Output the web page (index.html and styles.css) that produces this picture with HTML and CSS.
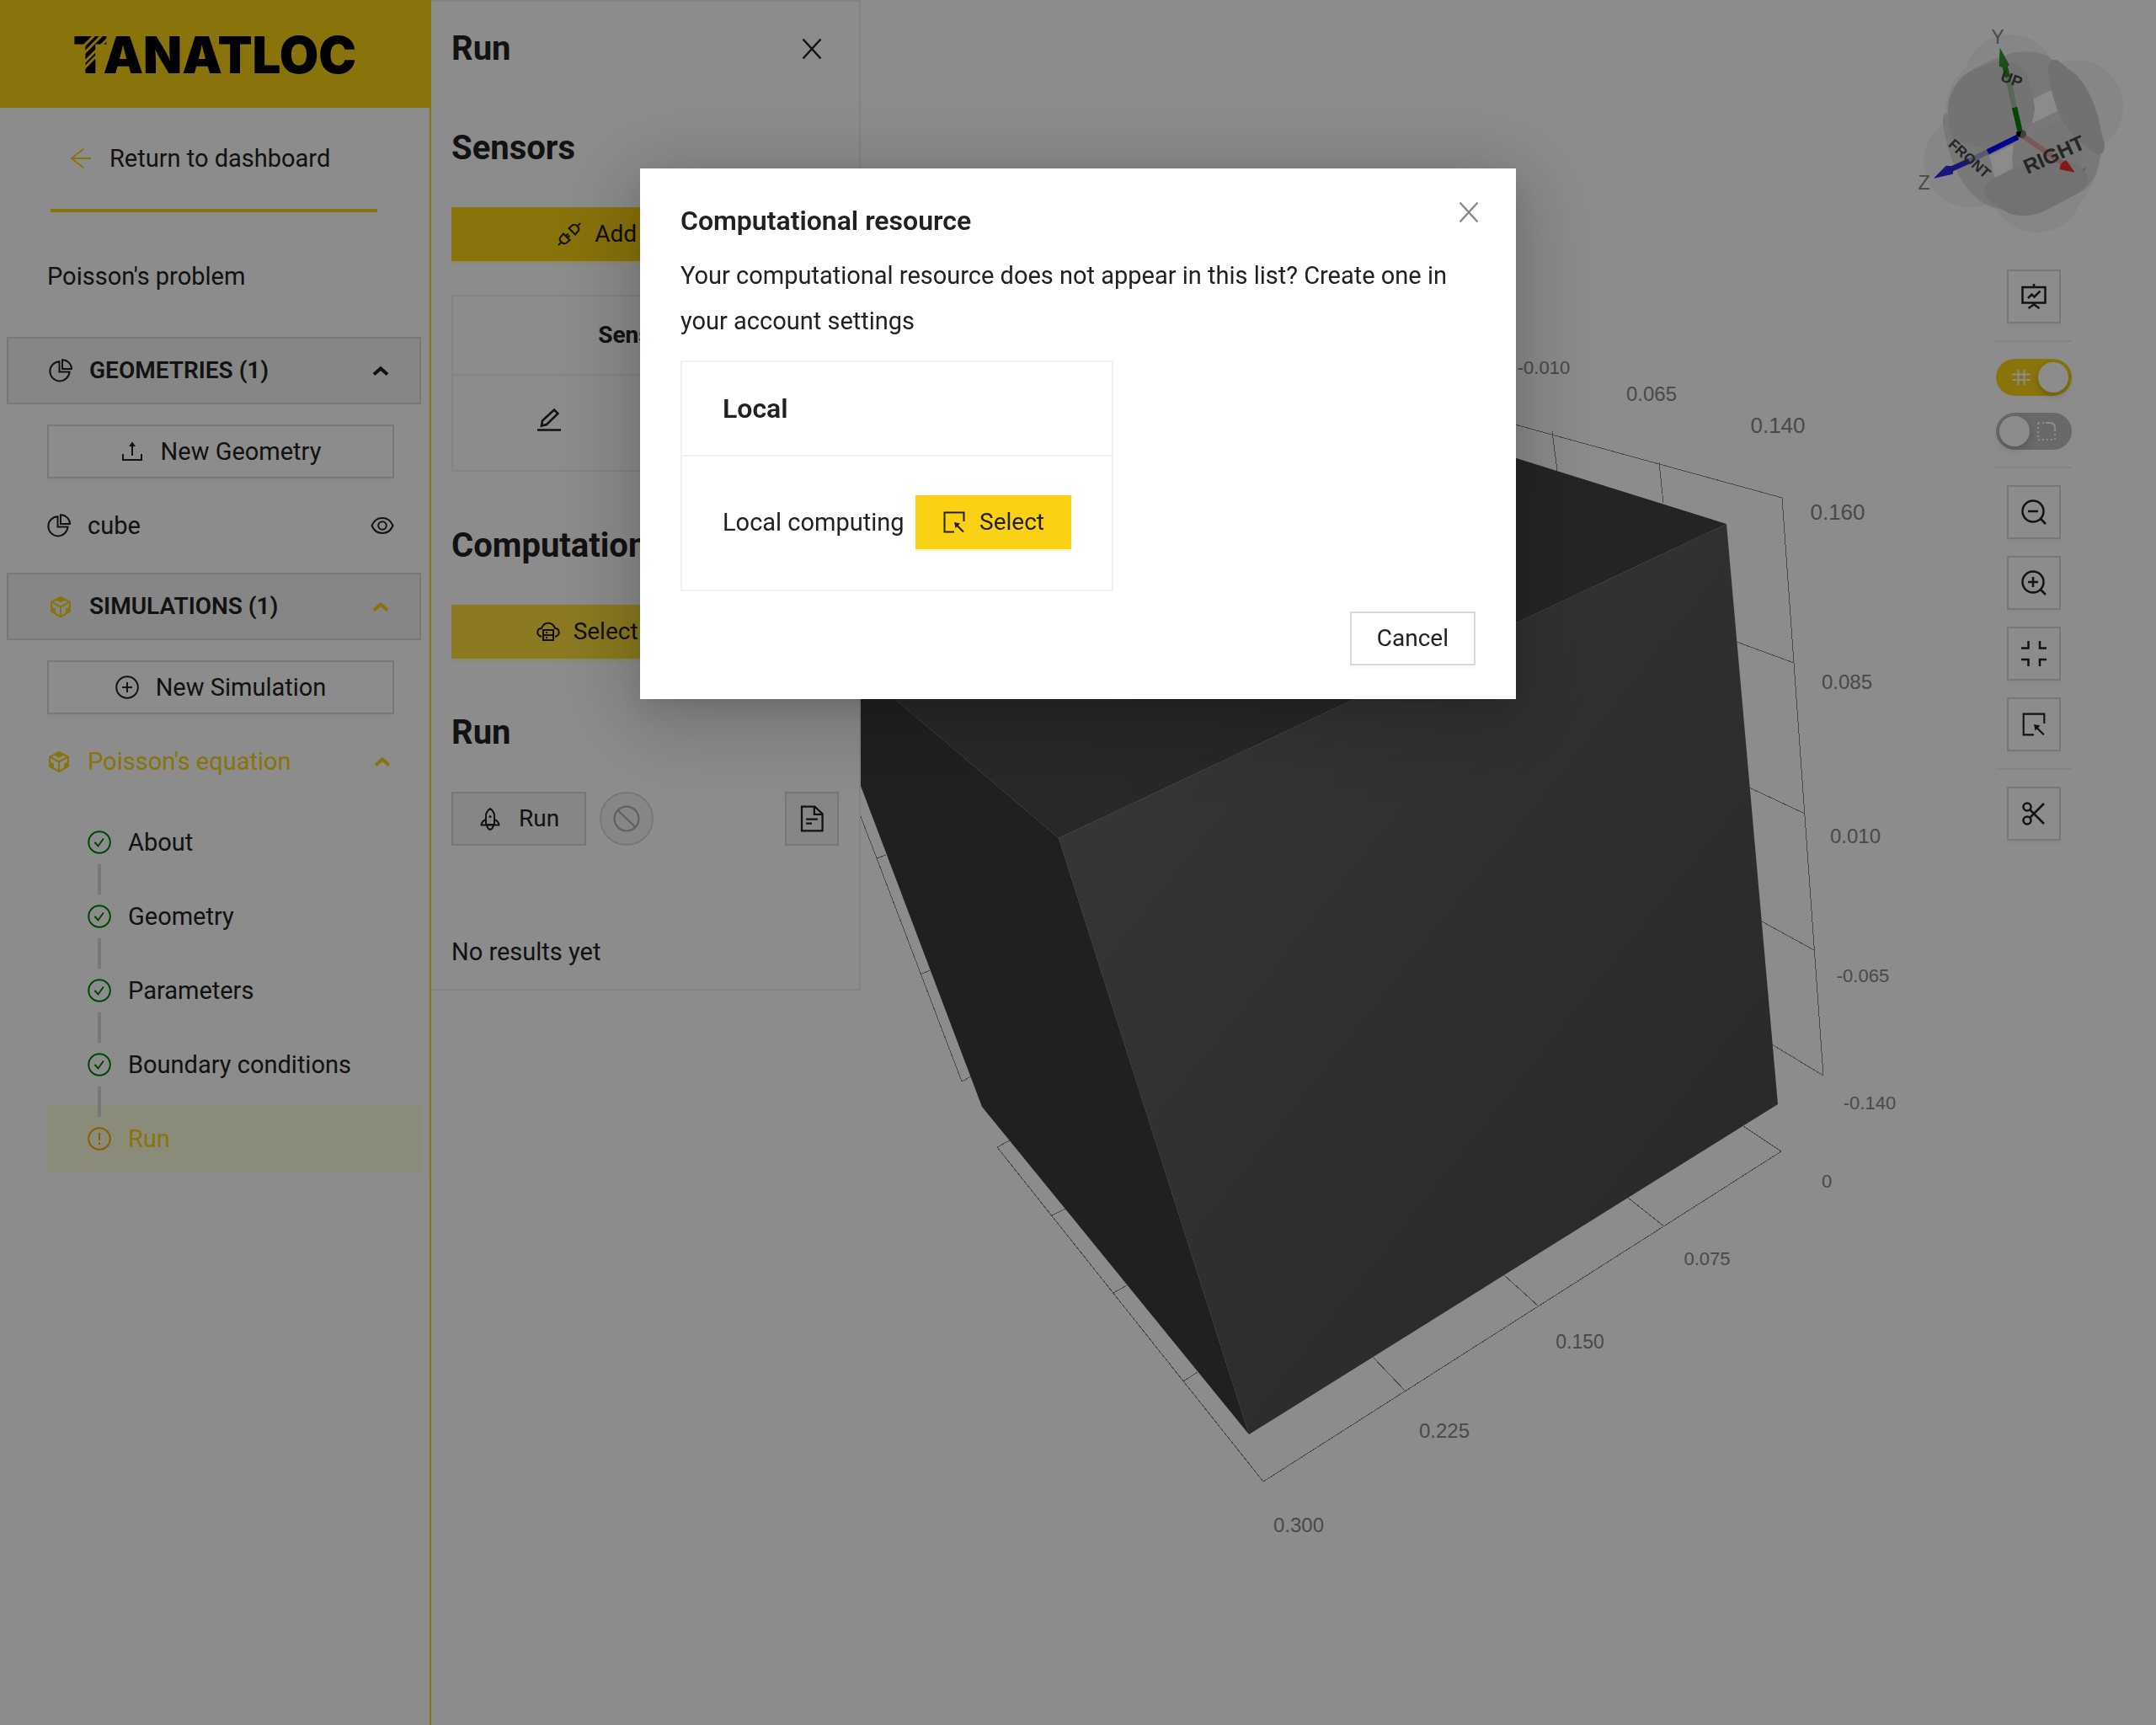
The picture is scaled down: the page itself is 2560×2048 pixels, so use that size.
FILE: index.html
```html
<!DOCTYPE html>
<html lang="en">
<head>
<meta charset="utf-8">
<title>Tanatloc</title>
<link rel="stylesheet" href="styles.css">
</head>
<body>
<svg class="sprite" aria-hidden="true">
  <symbol id="i-pie" viewBox="0 0 28 28"><path d="M12.500 3.200A11.600 11.600 0 1 0 24.500 15.500H12.500Z"/><path d="M16 1.200V12H27A11 11 0 0 0 16 1.200Z"/></symbol>
  <symbol id="i-cube" viewBox="0 0 28 28"><path d="M14 3 25 8.500V20L14 26 3 20V8.500ZM3 8.500 14 14.500 25 8.500M14 14.500V26"/><path class="solid" d="M14 2 21 6 14 9.500 7 6ZM3 14 8 17V22.500L3 20ZM25 14 20 17V22.500L25 20Z"/></symbol>
  <symbol id="i-up" viewBox="0 0 28 28"><path class="thick" d="M6 18.500 14 11.500 22 18.500"/></symbol>
  <symbol id="i-upload" viewBox="0 0 28 28"><path d="M3 17V24H25V17M14 19V6"/><path class="solid" d="M14 2.500 18 8H10Z"/></symbol>
  <symbol id="i-plus" viewBox="0 0 28 28"><circle cx="14" cy="14" r="12.800"/><path d="M14 8V20M8 14H20"/></symbol>
  <symbol id="i-eye" viewBox="0 0 28 28"><path d="M1.500 14C4 8 8.500 5 14 5S24 8 26.500 14C24 20 19.500 23 14 23S4 20 1.500 14Z"/><circle cx="14" cy="14" r="4.800"/></symbol>
  <symbol id="i-check" viewBox="0 0 28 28"><circle cx="14" cy="14" r="12.800"/><path d="M8.500 14 12.500 18.500 19 9.500"/></symbol>
  <symbol id="i-alert" viewBox="0 0 28 28"><circle cx="14" cy="14" r="12.800"/><path d="M14 7V16M14 18.500V21"/></symbol>
  <symbol id="i-back" viewBox="0 0 28 28"><path d="M17 3 3 14 17 25M3 14H26"/></symbol>
  <symbol id="i-close" viewBox="0 0 28 28"><path class="mid" d="M3.500 2.500 24.500 25.500M24.500 2.500 3.500 25.500"/></symbol>
  <symbol id="i-plug" viewBox="0 0 28 28"><path d="M13.500 7 17.500 3.500Q20.500 1.500 23.500 4.500T24.500 10.500L21 14.500ZM14.500 21 10.500 24.500Q7.500 26.500 4.500 23.500T3.500 17.500L7 13.500ZM23.500 4.500 27 1M4.500 23.500 1 27M9.500 16.500 12.500 13.500M11.500 18.500 14.500 15.500"/></symbol>
  <symbol id="i-edit" viewBox="0 0 28 28"><path class="mid" d="M0 26.500H28M5 21.500 6 15.500 20 2.500 24.500 7 11 20Z"/></symbol>
  <symbol id="i-cloud" viewBox="0 0 28 28"><path d="M6 20C-1 18 .5 10 6 10C9 1.500 19 1.500 22 10C27.500 10 29 18 22 20M8 12H20V24H8ZM8 18H20"/><path d="M11 15H13M11 21H13"/></symbol>
  <symbol id="i-rocket" viewBox="0 0 28 28"><path d="M9 21V9Q10.500 4 14 2Q17.500 4 19 9V21ZM9 15Q4 17 3.500 21.500H24.500Q24 17 19 15M10 22Q11 26 14 27Q17 26 18 22"/><circle class="solid" cx="14" cy="11.500" r="1.500"/></symbol>
  <symbol id="i-stop" viewBox="0 0 28 28"><circle cx="14" cy="14" r="12.600"/><path d="M5 5.500 23 22.500"/></symbol>
  <symbol id="i-doc" viewBox="0 0 28 28"><path d="M3.500 1.500H17L25 9V26.500H3.500ZM16.500 2V9.500H25M8 14.500H20M8 19H14"/></symbol>
  <symbol id="i-select" viewBox="0 0 28 28"><path d="M14 25.500H2.500V2.500H25.500V13M25 25.500 17 17.500"/><path class="solid" d="M14 14 21 15.500 15.500 21Z"/></symbol>
  <symbol id="i-board" viewBox="0 0 30 30"><path class="mid" d="M1.500 4H28.500V22.500H1.500ZM15 0V4M8 17 12.500 12.500 15.500 15.500 22.500 8.500M8.500 29 15 24.500 21.500 29M15 22V25"/></symbol>
  <symbol id="i-minus-lens" viewBox="0 0 30 30"><circle class="mid" cx="14" cy="14" r="12.500"/><path class="mid" d="M23 23 29 29M8 14H20"/></symbol>
  <symbol id="i-plus-lens" viewBox="0 0 30 30"><circle class="mid" cx="14" cy="14" r="12.500"/><path class="mid" d="M23 23 29 29M8 14H20M14 8V20"/></symbol>
  <symbol id="i-compress" viewBox="0 0 30 30"><path class="mid" d="M0 8.500H8.500V0M30 8.500H22V0M0 22H8.500V30M30 22H22V30"/></symbol>
  <symbol id="i-cut" viewBox="0 0 30 30"><circle class="mid" cx="7" cy="7" r="4.500"/><circle class="mid" cx="7" cy="23" r="4.500"/><path class="mid" d="M10 10 27 27M10 20 27 3"/></symbol>
  <symbol id="i-grid" viewBox="0 0 22 18"><path d="M0 5.500H22M0 12H22M7.500 0V18M14.500 0V18"/></symbol>
  <symbol id="i-corner" viewBox="0 0 22 22"><path stroke-dasharray="2 3" d="M1 1H11M1 1V21H21V10"/><path d="M10 1H15Q21 1 21 7V11"/></symbol>
</svg>

<div class="app">
  <aside class="sidebar">
    <div class="brand">
      <div class="logo">TANATLOC
        <svg class="logo-stripes" viewBox="0 0 46 44" aria-hidden="true"><path d="M8 16 25 -1M13 20 34 -1M11 33 44 0M12 39 34 17"/></svg>
      </div>
    </div>
    <nav class="menu">
      <a class="return" href="#dashboard"><svg class="icon accent"><use href="#i-back"/></svg>Return to dashboard</a>
      <hr class="accent-rule">
      <div class="project">Poisson's problem</div>

      <button class="group" type="button"><svg class="icon"><use href="#i-pie"/></svg><span>GEOMETRIES (1)</span><svg class="icon"><use href="#i-up"/></svg></button>
      <button class="btn wide" type="button"><svg class="icon"><use href="#i-upload"/></svg>New Geometry</button>
      <a class="item" href="#cube"><svg class="icon"><use href="#i-pie"/></svg><span>cube</span><svg class="icon"><use href="#i-eye"/></svg></a>

      <button class="group on" type="button"><svg class="icon"><use href="#i-cube"/></svg><span>SIMULATIONS (1)</span><svg class="icon"><use href="#i-up"/></svg></button>
      <button class="btn wide" type="button"><svg class="icon"><use href="#i-plus"/></svg>New Simulation</button>
      <a class="item accent" href="#poisson"><svg class="icon"><use href="#i-cube"/></svg><span>Poisson's equation</span><svg class="icon"><use href="#i-up"/></svg></a>

      <ul class="steps">
        <li><a href="#about"><svg class="icon"><use href="#i-check"/></svg>About</a></li>
        <li><a href="#geometry"><svg class="icon"><use href="#i-check"/></svg>Geometry</a></li>
        <li><a href="#parameters"><svg class="icon"><use href="#i-check"/></svg>Parameters</a></li>
        <li><a href="#boundary"><svg class="icon"><use href="#i-check"/></svg>Boundary conditions</a></li>
        <li class="current"><a href="#run"><svg class="icon"><use href="#i-alert"/></svg>Run</a></li>
      </ul>
    </nav>
  </aside>

  <main class="stage">
    <svg class="scene" viewBox="512 0 2048 2048" preserveAspectRatio="xMinYMin meet" role="img" aria-label="Cube geometry">
      <defs>
        <linearGradient id="g-right" gradientUnits="userSpaceOnUse" x1="1257" y1="900" x2="1950" y2="1450"><stop offset="0" stop-color="#636363"/><stop offset="1" stop-color="#4e4e4e"/></linearGradient>
        <linearGradient id="g-top" gradientUnits="userSpaceOnUse" x1="1300" y1="950" x2="1900" y2="600"><stop offset="0" stop-color="#4a4a4a"/><stop offset="1" stop-color="#434343"/></linearGradient>
      </defs>
      <g class="grid">
        <path d="M1500 422 2116 591 2165 1277M1843 512 1849 559M1970 549 1975 597M2062 762 2130 787M2077 935 2143 966M2092 1094 2154 1128M2104 1240 2165 1277"/>
        <path d="M2070 1337 2115 1367 1500 1759 1184 1362 1199 1354M1933 1422 1976 1456M1786 1514 1827 1551M1630 1611 1669 1652M1249 1443 1265 1435M1322 1535 1338 1526M1405 1640 1422 1629"/>
        <path d="M1003 920 1041 1019 1142 1284 1153 1278M1041 1019 1052 1015M1093 1157 1104 1152"/>
      </g>
      <path fill="#3b3b3b" d="M1257 995 1483 1703 1166 1314 1022 933 960 743Z"/>
      <path fill="url(#g-top)" d="M1257 995 2050 622 1400 419 960 743Z"/>
      <path fill="url(#g-right)" d="M1257 995 2050 622 2111 1311 1483 1703Z"/>
      <g class="ticks">
        <text class="s" x="1833" y="444">-0.010</text><text x="1961" y="476">0.065</text><text class="l" x="2111" y="514">0.140</text>
        <text class="l" x="2182" y="617">0.160</text><text x="2193" y="818">0.085</text><text x="2203" y="1001">0.010</text>
        <text class="s" x="2212" y="1166">-0.065</text><text class="s" x="2220" y="1317">-0.140</text>
        <text class="s" x="2169" y="1410">0</text><text class="s" x="2027" y="1502">0.075</text><text class="m" x="1876" y="1601">0.150</text>
        <text x="1715" y="1707">0.225</text><text x="1542" y="1819">0.300</text>
      </g>
    </svg>

    <svg class="gizmo" viewBox="0 0 960 870" role="img" aria-label="Orientation cube">
      <g fill="#f4f4f4"><circle cx="440" cy="285" r="163"/><circle cx="677" cy="380" r="166"/><circle cx="295" cy="575" r="163"/><circle cx="535" cy="660" r="168"/><path d="M208 400Q215 290 290 240L600 250 760 560Q750 660 690 720L560 700 300 660Z"/></g>
      <path fill="#dadada" d="M270 275Q300 245 400 205Q500 165 575 200L720 330 770 520 755 590Q745 640 700 680L480 768 380 738Q300 715 240 590Q200 480 200 420Q205 400 220 405Q215 340 270 275Z"/>
      <path fill="#fdfdfd" d="M520 353 590 319 609 396 520 439ZM366 554 458 512Q438 560 454 598L386 633Z"/>
      <path fill="#d1d1d1" d="M219 390Q220 320 280 265L380 222Q450 205 490 250Q520 300 528 390Q525 440 485 480L380 535 240 500Q222 450 219 390Z"/>
      <path fill="#cecece" d="M576 240Q580 205 610 215L680 270Q730 330 752 410L777 520Q775 560 745 545L680 500Q625 440 605 380Q577 300 576 240Z"/>
      <path fill="#cfcfcf" d="M348 685Q350 655 380 635L560 555Q650 535 690 590Q720 620 718 645Q710 670 680 690L560 753Q500 778 440 762Q350 710 348 685Z"/>
      <path fill="#d7d7d7" d="M454 512 528 470 620 430 700 530 690 590 600 560 450 600Q445 550 454 512Z"/>
      <g fill="none" stroke-width="19"><path stroke="#008000" d="M456 382 476 470"/><path stroke="#a6bba6" d="M432 275 456 382"/><path stroke="#228b22" d="M417 220 432 275"/><path stroke="#0000ff" d="M468 488 360 541"/><path stroke="#a0a0cc" d="M360 541 295 573"/><path stroke="#2828e0" d="M295 573 220 607"/><path stroke="#dda5a5" d="M482 482 625 580"/></g>
      <path fill="#2c932c" d="M404 170 438 232Q420 245 401 236Z"/><path fill="#2828e0" d="M168 635 212 590 240 592 236 620Z"/><path fill="#f22a2a" d="M671 614 617 603Q615 580 640 570Z"/>
      <circle cx="483" cy="478" r="15" fill="#777"/><path fill="#000" d="M462 470 482 466 474 490 464 484Z"/>
      <path stroke="#bbb" stroke-width="7" d="M698 609 709 598"/>
      <g class="axes"><text x="396" y="157">Y</text><text x="134" y="674">Z</text></g>
      <g class="faces"><text font-size="74" transform="translate(607 574) rotate(-24)">RIGHT</text><text font-size="52" transform="translate(284 578) rotate(42)">FRONT</text><text font-size="56" transform="translate(439 300) rotate(20)">UP</text></g>
    </svg>

    <div class="toolbar">
      <button class="tool" type="button" aria-label="Snapshot"><svg><use href="#i-board"/></svg></button>
      <hr>
      <label class="switch"><input type="checkbox" role="switch" checked aria-label="Display grid"><svg class="grid-mark"><use href="#i-grid"/></svg></label>
      <label class="switch"><input type="checkbox" role="switch" aria-label="Transparency"><svg class="corner-mark"><use href="#i-corner"/></svg></label>
      <hr>
      <button class="tool" type="button" aria-label="Zoom out"><svg><use href="#i-minus-lens"/></svg></button>
      <button class="tool" type="button" aria-label="Zoom in"><svg><use href="#i-plus-lens"/></svg></button>
      <button class="tool" type="button" aria-label="Zoom to fit"><svg><use href="#i-compress"/></svg></button>
      <button class="tool" type="button" aria-label="Zoom to selection"><svg><use href="#i-select"/></svg></button>
      <hr>
      <button class="tool" type="button" aria-label="Section view"><svg><use href="#i-cut"/></svg></button>
    </div>

    <section class="panel">
      <header class="panel-head"><h2>Run</h2><button class="plain" type="button" aria-label="Close panel"><svg class="icon"><use href="#i-close"/></svg></button></header>
      <div class="block">
        <h2>Sensors</h2>
        <button class="btn primary" type="button"><svg class="icon"><use href="#i-plug"/></svg>Add a sensor</button>
        <div class="sensor">
          <div class="sensor-name">Sensor 1</div>
          <div class="sensor-actions"><button class="plain" type="button" aria-label="Edit sensor"><svg class="icon"><use href="#i-edit"/></svg></button></div>
        </div>
      </div>
      <div class="block">
        <h2>Computational resource</h2>
        <button class="btn primary focus" type="button"><svg class="icon"><use href="#i-cloud"/></svg>Select a resource</button>
      </div>
      <div class="block">
        <h2>Run</h2>
        <div class="run-row">
          <button class="btn off" type="button"><svg class="icon"><use href="#i-rocket"/></svg>Run</button>
          <button class="btn off round" type="button" disabled aria-label="Stop"><svg class="icon big"><use href="#i-stop"/></svg></button>
          <button class="btn off square" type="button" aria-label="Log"><svg class="icon big"><use href="#i-doc"/></svg></button>
        </div>
      </div>
      <p class="results">No results yet</p>
    </section>
  </main>
</div>

<div class="overlay">
  <div class="modal" role="dialog" aria-modal="true" aria-labelledby="modal-title">
    <button class="plain modal-close" type="button" aria-label="Close"><svg class="icon"><use href="#i-close"/></svg></button>
    <h3 id="modal-title">Computational resource</h3>
    <p>Your computational resource does not appear in this list? Create one in your account settings</p>
    <div class="card">
      <h3>Local</h3>
      <div class="card-body"><span>Local computing</span><button class="btn primary" type="button"><svg class="icon"><use href="#i-select"/></svg>Select</button></div>
    </div>
    <footer><button class="btn" type="button">Cancel</button></footer>
  </div>
</div>
</body>
</html>
```

FILE: styles.css
```css
:root {
  --yellow: #fad114;
  --ink: #212121;
  --line: #d9d9d9;
  --soft: #f0f0f0;
}
* { box-sizing: border-box; }
body {
  margin: 0;
  background: #fff;
  color: var(--ink);
  font: 29px/44px Roboto, "Liberation Sans", sans-serif;
}
h2, h3, p, ul { margin: 0; padding: 0; }
h2 { font-size: 40px; line-height: 60px; font-weight: 700; white-space: nowrap; }
h3 { font-size: 32px; line-height: 44px; font-weight: 600; }
hr { margin: 0; border: 0; }
a { color: inherit; text-decoration: none; }
button { font: inherit; color: inherit; cursor: pointer; }

.sprite { display: none; }
svg { fill: none; stroke: none; }
symbol path, symbol circle { fill: none; stroke: currentColor; stroke-width: 2; }
symbol .mid { stroke-width: 2.5; }
symbol .thick { stroke-width: 4; }
symbol .solid { fill: currentColor; stroke: none; }
.icon { width: 28px; height: 28px; flex: none; }
.icon.big { width: 32px; height: 32px; }
.accent { color: var(--yellow); }

.app { display: flex; min-height: 100vh; }

/* Sidebar */
.sidebar {
  width: 20%;
  min-width: 512px;
  border-right: 2px solid var(--yellow);
}
.brand {
  display: flex;
  justify-content: center;
  align-items: center;
  height: 128px;
  padding-top: 2px;
  background: var(--yellow);
}
.logo {
  position: relative;
  font: 900 60px/64px Inter, Lato, sans-serif;
  color: #000;
}
.logo-stripes {
  position: absolute;
  left: 0;
  top: 10px;
  width: 46px;
  height: 44px;
  stroke: var(--yellow);
  stroke-width: 3;
}
.menu {
  display: flex;
  flex-direction: column;
  padding: 0 8px;
  border-right: 2px solid #f8f8f8;
}
.return {
  display: flex;
  align-items: center;
  gap: 20px;
  margin: 38px 74px;
}
.accent-rule { height: 4px; margin: 0 52px; background: var(--yellow); }
.project { margin: 54px 48px 50px; }
.group {
  display: flex;
  align-items: center;
  gap: 20px;
  height: 80px;
  padding: 0 32px 0 48px;
  border: 2px solid var(--line);
  background: #f4f4f4;
  font-size: 28px;
  font-weight: 600;
  text-align: left;
}
.group.on .icon:first-child, .group.on .icon:last-child { color: var(--yellow); }
.group span, .item span { flex: 1; }
.item {
  display: flex;
  align-items: center;
  gap: 20px;
  height: 80px;
  margin: 0 32px 16px 48px;
}
.steps { list-style: none; display: grid; gap: 8px; padding-bottom: 8px; }
.steps li { position: relative; margin-left: 48px; padding-left: 48px; }
.steps a { display: flex; align-items: center; gap: 20px; height: 80px; }
.steps .icon { color: green; }
.steps li + li::before {
  content: "";
  position: absolute;
  left: 60px;
  top: -22px;
  width: 4px;
  height: 36px;
  background: var(--line);
}
.steps .current { background: #fdfede; color: var(--yellow); }
.steps .current .icon { color: orange; }

/* Buttons */
.btn {
  display: flex;
  justify-content: center;
  align-items: center;
  gap: 16px;
  height: 64px;
  padding: 0 30px;
  border: 2px solid var(--line);
  background: #fff;
  box-shadow: 0 4px 0 rgba(0, 0, 0, 0.02);
  font-size: 28px;
}
.btn.wide { margin: 24px 32px 16px 48px; gap: 20px; font-size: 29px; }
.btn.primary {
  border-color: var(--yellow);
  background: var(--yellow);
  box-shadow: 0 4px 0 #fefed8;
}
.btn.primary.focus { background: #fddf3c; border-color: #fddf3c; }
.btn.off { gap: 20px; background: #f5f5f5; box-shadow: none; }
.btn.round { width: 64px; padding: 0; border-radius: 50%; color: #b0b0b0; }
.btn.square { width: 64px; padding: 0; margin-left: auto; }
.plain { display: flex; padding: 0; border: 0; background: none; }

/* Viewer */
.stage { position: relative; flex: 1; min-width: 0; }
.scene { display: block; width: 100%; }
.grid { stroke: #858585; stroke-width: 1; shape-rendering: crispEdges; }
.ticks {
  fill: #868686;
  font: 24px "Liberation Sans", Arial, sans-serif;
  text-anchor: middle;
}
.ticks .s { font-size: 22px; }
.ticks .m { font-size: 23px; }
.ticks .l { font-size: 26px; }
.gizmo { position: absolute; top: 0; right: 0; width: 320px; height: 290px; }
.axes { fill: #888; font: 70px "Liberation Sans", Arial, sans-serif; text-anchor: middle; }
.faces { fill: #444; font-family: "Liberation Sans", Arial, sans-serif; font-weight: 700; text-anchor: middle; }
.toolbar {
  position: absolute;
  top: 320px;
  right: 100px;
  width: 90px;
  display: flex;
  flex-direction: column;
  align-items: center;
  gap: 20px;
}
.toolbar hr { width: 100%; height: 2px; background: var(--soft); }
.tool {
  display: grid;
  place-items: center;
  width: 64px;
  height: 64px;
  padding: 0;
  border: 2px solid var(--line);
  background: #fff;
  box-shadow: 0 4px 0 rgba(0, 0, 0, 0.02);
}
.tool svg { width: 30px; height: 30px; }
.switch { position: relative; display: block; width: 90px; height: 44px; color: #fff; }
.switch input {
  appearance: none;
  display: flex;
  width: 90px;
  height: 44px;
  margin: 0;
  padding: 4px;
  border-radius: 22px;
  background: #bfbfbf;
}
.switch input:checked { justify-content: flex-end; background: var(--yellow); }
.switch input::after {
  content: "";
  width: 36px;
  height: 36px;
  border-radius: 50%;
  background: #fff;
  box-shadow: 0 4px 8px rgba(0, 35, 11, 0.2);
}
.switch svg { position: absolute; }
.grid-mark { left: 19px; top: 13px; width: 22px; height: 18px; }
.corner-mark { left: 49px; top: 11px; width: 22px; height: 22px; }

/* Run panel */
.panel {
  position: absolute;
  top: 0;
  left: 0;
  width: 510px;
  padding: 26px 24px 22px;
  border: 2px solid var(--soft);
  border-left: 0;
  background: #fff;
}
.panel-head { display: flex; justify-content: space-between; align-items: center; margin-bottom: 58px; padding-right: 18px; }
.block { display: flex; flex-direction: column; margin-bottom: 58px; }
.block h2 { margin-bottom: 40px; overflow: hidden; }
.sensor { margin-top: 40px; border: 2px solid var(--soft); text-align: center; font-size: 28px; font-weight: 700; }
.sensor-name { padding: 24px; border-bottom: 2px solid var(--soft); }
.sensor-actions { display: grid; grid-template-columns: 1fr 1fr; justify-items: center; align-items: center; height: 112px; padding-bottom: 8px; }
.run-row { display: flex; gap: 16px; }
.results { margin-top: 104px; }

/* Modal */
.overlay { position: fixed; inset: 0; padding-top: 200px; background: rgba(0, 0, 0, 0.45); }
.modal {
  position: relative;
  width: 1040px;
  margin: 0 auto;
  padding: 40px 48px;
  background: #fff;
  box-shadow: 0 6px 12px -8px rgba(0, 0, 0, 0.12), 0 12px 32px rgba(0, 0, 0, 0.08), 0 18px 96px 16px rgba(0, 0, 0, 0.2);
}
.modal-close { position: absolute; top: 38px; right: 42px; color: #8c8c8c; }
.modal p { margin: 16px 0 20px; line-height: 54px; }
.card { width: 514px; border: 2px solid var(--soft); }
.card h3 { padding: 33px 48px; border-bottom: 2px solid var(--soft); }
.card-body { display: flex; justify-content: space-between; align-items: center; padding: 46px 48px 48px; }
.modal footer { display: flex; justify-content: flex-end; margin-top: 24px; }
```
